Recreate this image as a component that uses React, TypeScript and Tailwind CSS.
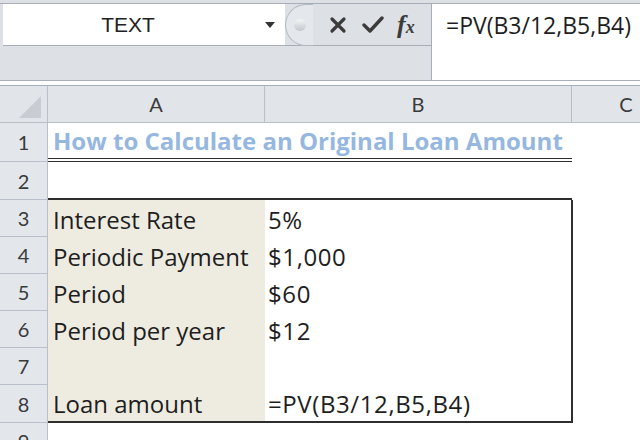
import type { ReactNode } from "react";

const rows: { n: number; a?: string; b?: string }[] = [
  { n: 3, a: "Interest Rate", b: "5%" },
  { n: 4, a: "Periodic Payment", b: "$1,000" },
  { n: 5, a: "Period", b: "$60" },
  { n: 6, a: "Period per year", b: "$12" },
  { n: 7 },
  { n: 8, a: "Loan amount", b: "=PV(B3/12,B5,B4)" },
];

function RowHead({ children }: { children?: ReactNode }) {
  return (
    <div className="w-[48px] shrink-0 h-full bg-[#e3e7ec] border-r border-b border-[#b9bfc8] flex items-center justify-center text-[20px] text-[#3a3a3a] font-['Lato',sans-serif]">
      {children}
    </div>
  );
}

export default function App() {
  return (
    <div className="w-[640px] h-[440px] overflow-hidden bg-white font-['Open_Sans',sans-serif] text-[#1e1e1e]">
      {/* formula bar */}
      <div className="bg-[#dde1e6] pt-[3px]">
        <div className="flex h-[78px] border-t border-b border-[#a7aeb7]">
          <div className="w-[432px] shrink-0 flex flex-col border-r border-[#a7aeb7] pl-[3px]">
            <div className="flex h-[42px] border-b border-[#a7aeb7]">
              <div className="w-[282px] bg-white flex items-center relative">
                <span className="w-[250px] text-center text-[21px] font-['Liberation_Sans',sans-serif] text-[#222]">
                  TEXT
                </span>
                <svg width="10" height="6" viewBox="0 0 10 6" className="ml-[12px]">
                  <path d="M0 0 H10 L5 6 Z" fill="#333" />
                </svg>
              </div>
              <div className="flex-1 flex items-center">
                <div className="h-[42px] w-[28px] rounded-l-full border border-r-0 border-[#b3b9c1] bg-[#e4e7eb] flex items-center pl-[8px]">
                  <div className="w-[12px] h-[12px] rounded-full bg-gradient-to-b from-[#f4f5f6] to-[#c3c7cc]" />
                </div>
                <svg width="18" height="18" viewBox="0 0 18 18" className="ml-[16px]">
                  <path d="M3 3 L15 15 M15 3 L3 15" stroke="#3b3b3b" strokeWidth="3.2" strokeLinecap="round" />
                </svg>
                <svg width="22" height="20" viewBox="0 0 22 20" className="ml-[15px]">
                  <path d="M2 10 L8 16 L20 3" stroke="#3b3b3b" strokeWidth="3.4" fill="none" strokeLinecap="round" strokeLinejoin="round" />
                </svg>
                <span className="ml-[13px] font-['Liberation_Serif',serif] italic font-bold text-[#3b3b3b] leading-none">
                  <span className="text-[26px]">f</span>
                  <span className="text-[18px]">x</span>
                </span>
              </div>
            </div>
            <div className="flex-1" />
          </div>
          <div className="flex-1 bg-white pl-[14px] pt-[6px] text-[23px] leading-[30px]">=PV(B3/12,B5,B4)</div>
        </div>
        <div className="h-[5px] bg-white border-b border-[#a7aeb7]" />
      </div>

      {/* column headers */}
      <div className="flex h-[37px] bg-[#e1e5ea] text-[20px] text-[#3a3a3a] font-['Lato',sans-serif]">
        <div className="w-[48px] shrink-0 border-r border-b border-[#b9bfc8] relative">
          <svg width="22" height="22" viewBox="0 0 22 22" className="absolute right-[6px] bottom-[4px]">
            <path d="M22 0 V22 H0 Z" fill="#c9cdd3" />
          </svg>
        </div>
        <div className="w-[217px] shrink-0 border-r border-b border-[#b9bfc8] flex items-center justify-center">A</div>
        <div className="w-[307px] shrink-0 border-r border-b border-[#b9bfc8] flex items-center justify-center">B</div>
        <div className="w-[108px] shrink-0 border-b border-[#b9bfc8] flex items-center justify-center">C</div>
      </div>

      {/* row 1 */}
      <div className="flex h-[39px]">
        <RowHead>1</RowHead>
        <div className="w-[524px] shrink-0 border-b-[4px] border-double border-[#2e2e2e] pl-[5px] flex items-center text-[24px] font-bold text-[#95b7e0] whitespace-nowrap">
          How to Calculate an Original Loan Amount
        </div>
      </div>

      {/* row 2 */}
      <div className="flex h-[38px]">
        <RowHead>2</RowHead>
        <div className="w-[524px] shrink-0 border-b-2 border-[#2e2e2e]" />
      </div>

      {rows.map((r) => (
        <div key={r.n} className={`flex ${r.n === 8 ? "h-[38px]" : "h-[37px]"}`}>
          <RowHead>{r.n}</RowHead>
          <div
            className={`w-[217px] shrink-0 bg-[#eeece1] pl-[5px] pt-[2px] flex items-center text-[24px] whitespace-nowrap ${
              r.n === 8 ? "border-b-2 border-[#2e2e2e]" : ""
            }`}
          >
            {r.a}
          </div>
          <div
            className={`w-[308px] shrink-0 bg-white pl-[3px] pt-[2px] flex items-center text-[24px] tracking-[0.6px] border-r-2 border-[#2e2e2e] ${
              r.n === 8 ? "border-b-2" : ""
            }`}
          >
            {r.b}
          </div>
        </div>
      ))}

      <div className="flex h-[37px]">
        <RowHead>9</RowHead>
      </div>
    </div>
  );
}
